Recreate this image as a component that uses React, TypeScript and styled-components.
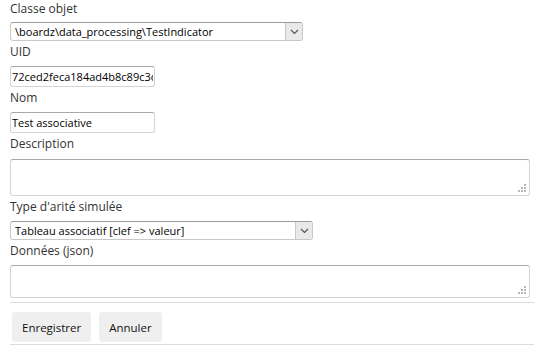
import React from 'react'
import styled, { createGlobalStyle } from 'styled-components'

const GlobalStyle = createGlobalStyle`
  html, body {
    margin: 0;
    padding: 0;
    background: #ffffff;
  }
  body {
    font-family: 'Open Sans', 'Noto Sans', sans-serif;
    font-size: 12px;
    color: #222;
  }
`

const grip =
  "url(\"data:image/svg+xml,%3Csvg xmlns='http://www.w3.org/2000/svg' width='8' height='8'%3E%3Cg fill='%23b8b8b8'%3E%3Crect x='6' y='0' width='2' height='2'/%3E%3Crect x='3' y='3' width='2' height='2'/%3E%3Crect x='6' y='3' width='2' height='2'/%3E%3Crect x='0' y='6' width='2' height='2'/%3E%3Crect x='3' y='6' width='2' height='2'/%3E%3Crect x='6' y='6' width='2' height='2'/%3E%3C/g%3E%3C/svg%3E\")"

const Form = styled.form`
  display: flex;
  flex-direction: column;
  padding: 1px 1px 0 10px;
  width: 523px;
`

const Field = styled.div`
  display: flex;
  flex-direction: column;
  align-items: flex-start;
  margin-bottom: 3px;

  &:last-of-type {
    margin-bottom: 0;
  }
`

const Label = styled.label<{ $gap?: number }>`
  display: block;
  height: 16px;
  line-height: 16px;
  font-size: 12px;
  color: #333;
  margin-bottom: ${({ $gap }) => $gap ?? 6}px;
`

const TextInput = styled.input`
  box-sizing: border-box;
  width: 145px;
  height: 21px;
  padding: 0 1px;
  font-family: inherit;
  font-size: 11px;
  color: #000;
  border: 1px solid #d4d4d4;
  border-top-color: #a8a8a8;
  border-radius: 3px;
  background: #fff;
  outline: none;
`

const TextArea = styled.textarea<{ $h: number }>`
  box-sizing: border-box;
  display: block;
  width: 520px;
  height: ${({ $h }) => $h}px;
  font-family: inherit;
  font-size: 11px;
  border: 1px solid #d4d4d4;
  border-top-color: #a8a8a8;
  border-radius: 3px;
  resize: none;
  outline: none;
  background: #fff ${grip} no-repeat right 3px bottom 3px;
`

const SelectBox = styled.div<{ $w: number }>`
  box-sizing: border-box;
  display: flex;
  align-items: stretch;
  width: ${({ $w }) => $w}px;
  height: 19px;
  border: 1px solid #c8c8c8;
  border-top-color: #9a9a9a;
  border-radius: 3px;
  background: #fff;
  overflow: hidden;
`

const NativeSelect = styled.select`
  flex: 1;
  appearance: none;
  -webkit-appearance: none;
  border: none;
  background: transparent;
  padding: 0 0 0 4px;
  margin: 0;
  font-family: inherit;
  font-size: 11px;
  color: #000;
  outline: none;
`

const ArrowBox = styled.span`
  display: flex;
  align-items: center;
  justify-content: center;
  width: 16px;
  background: #e9e9e9;
  border-left: 1px solid #c8c8c8;
`

const Footer = styled.div`
  display: flex;
  gap: 8px;
  margin-top: 1px;
  padding: 9px 0 2px 2px;
  border-top: 1px solid #dcdcdc;
  border-bottom: 1px solid #dcdcdc;
  width: 523px;
`

const Button = styled.button`
  height: 30px;
  padding: 0 10px;
  font-family: inherit;
  font-size: 11.5px;
  color: #111;
  background: #efefef;
  border: none;
  border-radius: 3px;
`

const Chevron = () => (
  <svg width="9" height="6" viewBox="0 0 9 6">
    <path d="M1 1 L4.5 4.5 L8 1" fill="none" stroke="#555" strokeWidth="1.2" />
  </svg>
)

function Select({ width, value }: { width: number; value: string }) {
  return (
    <SelectBox $w={width}>
      <NativeSelect defaultValue={value}>
        <option value={value}>{value}</option>
      </NativeSelect>
      <ArrowBox>
        <Chevron />
      </ArrowBox>
    </SelectBox>
  )
}

export default function App() {
  return (
    <>
      <GlobalStyle />
      <Form onSubmit={(e) => e.preventDefault()}>
        <Field>
          <Label $gap={5}>Classe objet</Label>
          <Select width={293} value={'\\boardz\\data_processing\\TestIndicator'} />
        </Field>
        <Field>
          <Label>UID</Label>
          <TextInput defaultValue="72ced2feca184ad4b8c89c3d0e51a7f2" />
        </Field>
        <Field>
          <Label>Nom</Label>
          <TextInput defaultValue="Test associative" />
        </Field>
        <Field>
          <Label $gap={7}>Description</Label>
          <TextArea $h={37} />
        </Field>
        <Field>
          <Label>Type d'arité simulée</Label>
          <Select width={303} value="Tableau associatif [clef => valeur]" />
        </Field>
        <Field>
          <Label>Données (json)</Label>
          <TextArea $h={33} />
        </Field>
        <Footer>
          <Button type="submit">Enregistrer</Button>
          <Button type="button">Annuler</Button>
        </Footer>
      </Form>
    </>
  )
}
